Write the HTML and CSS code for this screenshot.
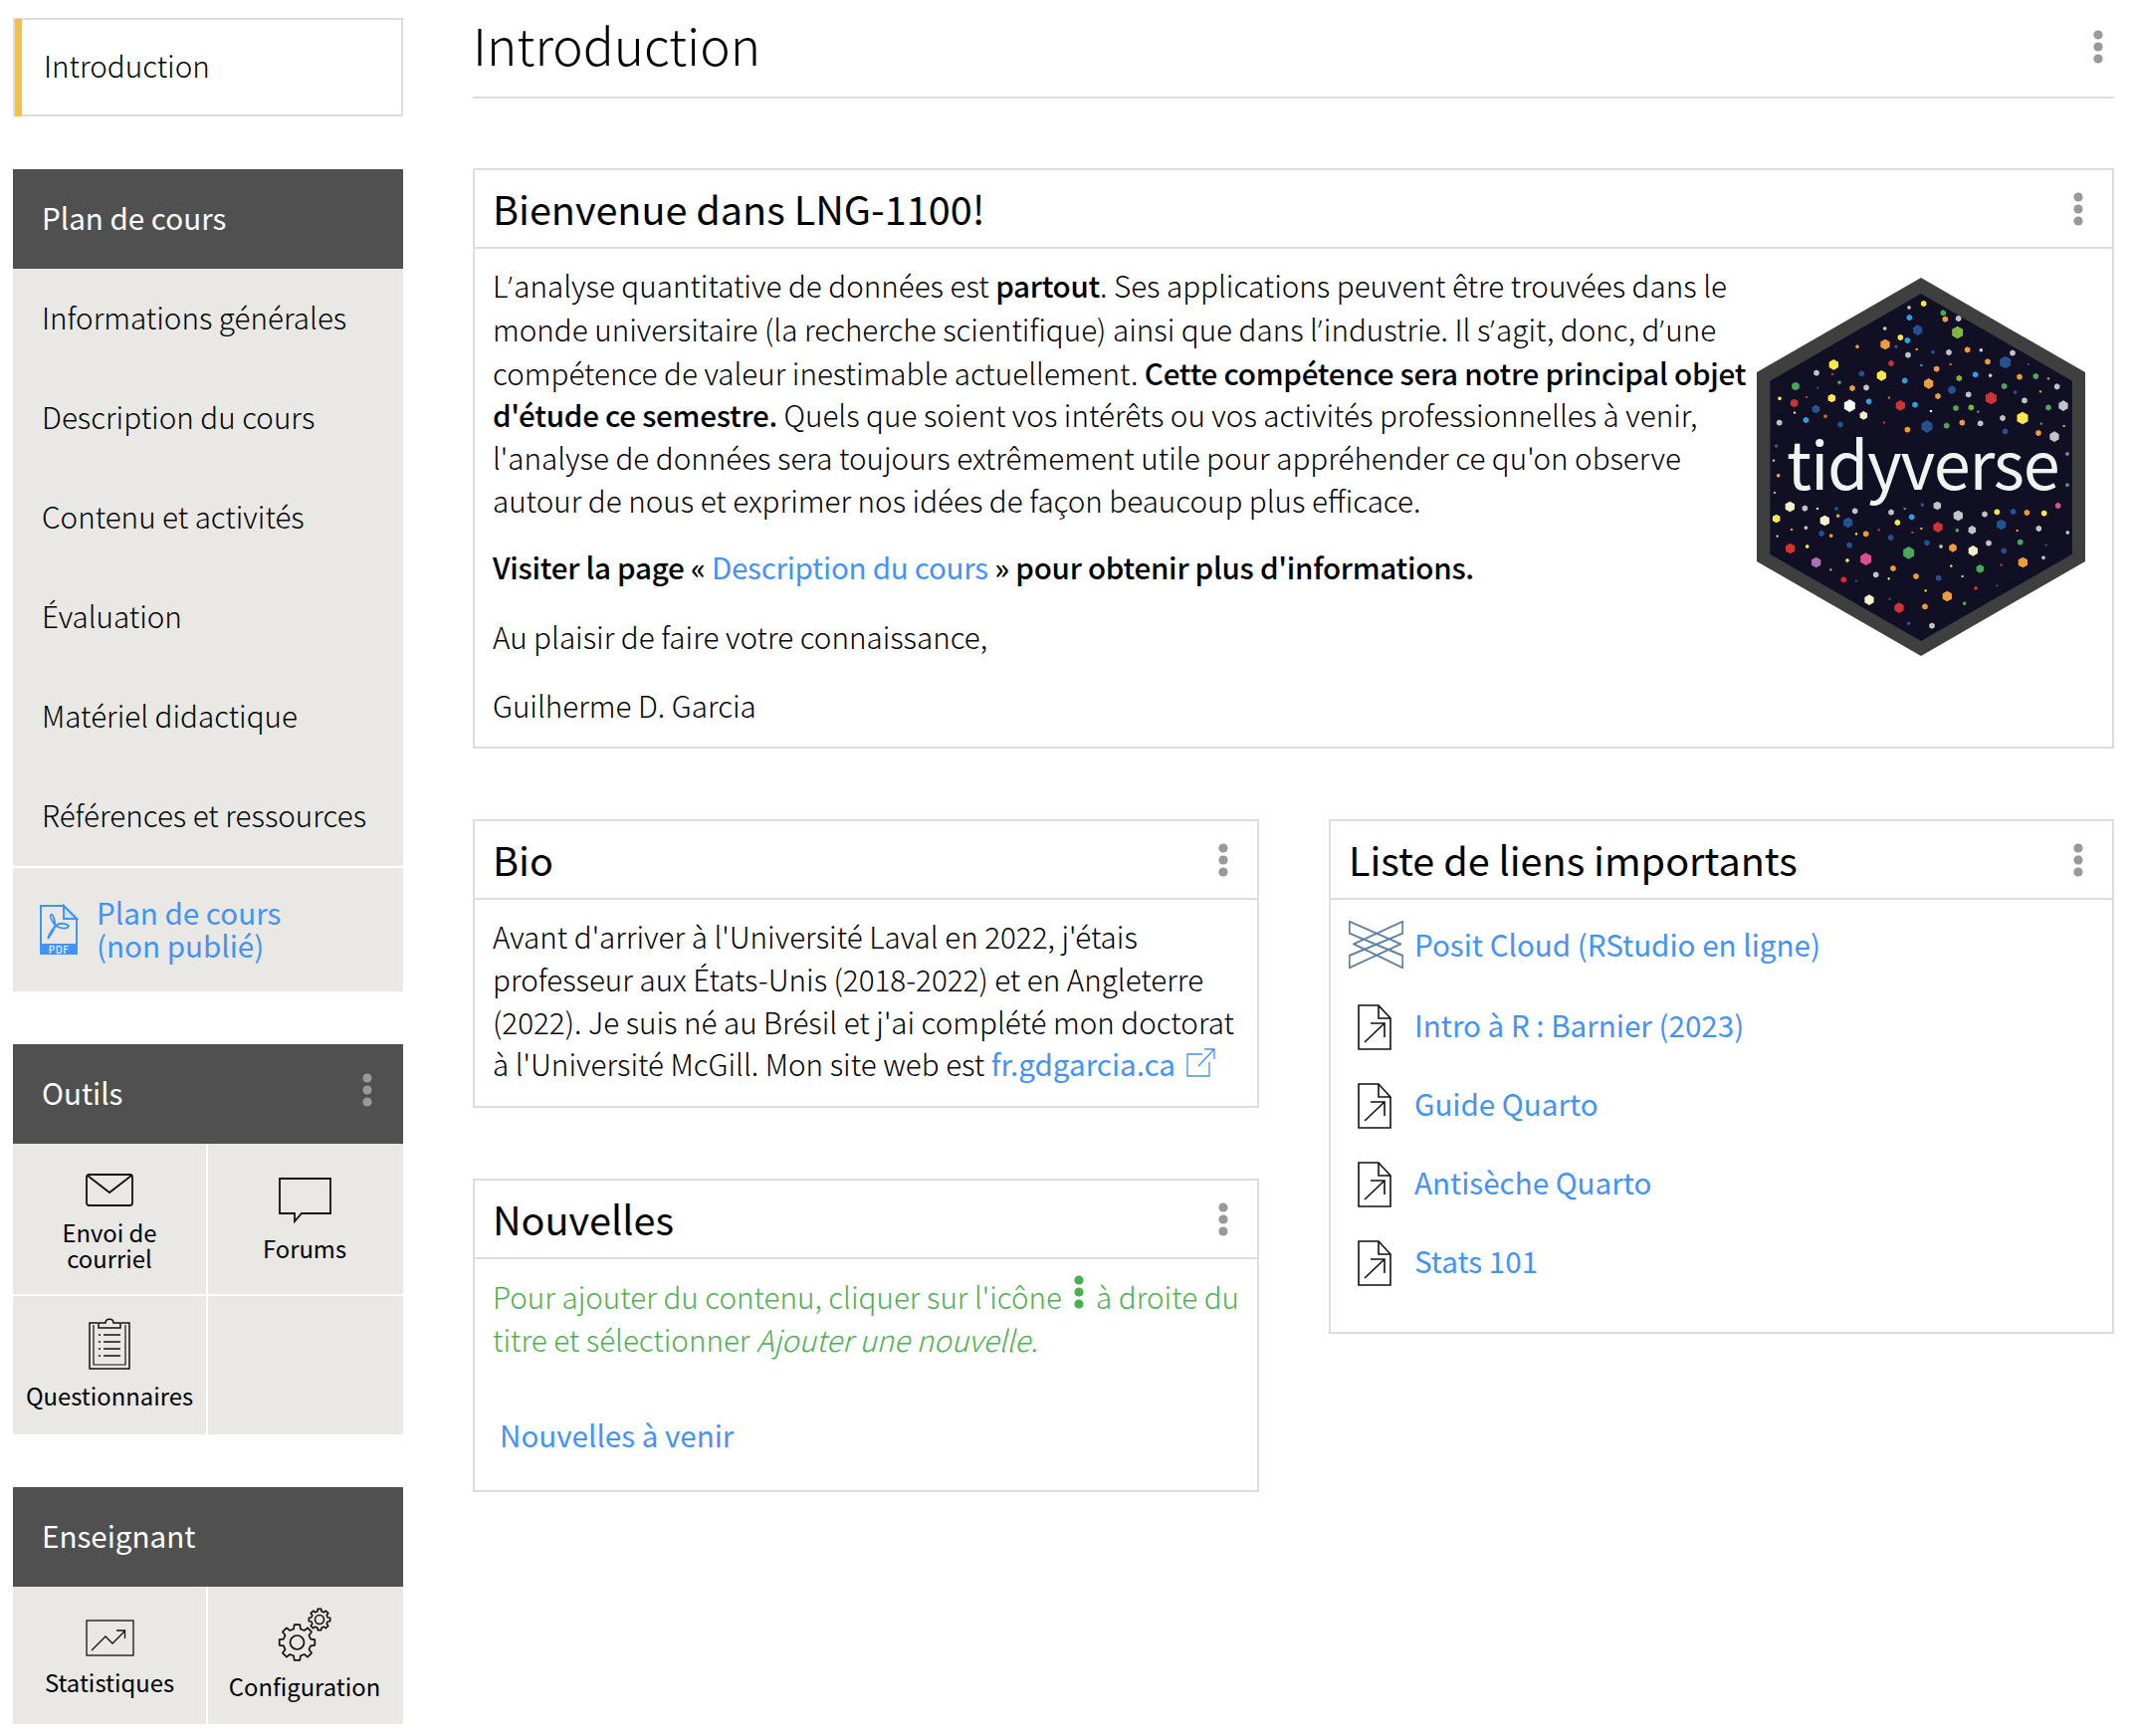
FILE: index.html
```html
<!DOCTYPE html>
<html lang="fr">
<head>
<meta charset="utf-8">
<title>LNG-1100</title>
<link rel="stylesheet" href="styles.css">
</head>
<body>
<svg class="defs" width="0" height="0" aria-hidden="true">
  <defs>
    <symbol id="kebab" viewBox="0 0 10 34"><circle cx="5" cy="5" r="4.6"/><circle cx="5" cy="17" r="4.6"/><circle cx="5" cy="29" r="4.6"/></symbol>
    <symbol id="doc" viewBox="0 0 34 46"><path d="M1 1H21L33 14V45H1Z M21 1V14H33" fill="#fff" stroke="#111" stroke-width="1.6"/><path d="M7 38L27 19M13 19H27V33" fill="none" stroke="#111" stroke-width="1.6"/></symbol>
    <polygon id="gear" points="-3.39,-13.58 -2.82,-17.78 2.82,-17.78 3.39,-13.58 7.2,-12 10.58,-14.57 14.57,-10.58 12,-7.2 13.58,-3.39 17.78,-2.82 17.78,2.82 13.58,3.39 12,7.2 14.57,10.58 10.58,14.57 7.2,12 3.39,13.58 2.82,17.78 -2.82,17.78 -3.39,13.58 -7.2,12 -10.58,14.57 -14.57,10.58 -12,7.2 -13.58,3.39 -17.78,2.82 -17.78,-2.82 -13.58,-3.39 -12,-7.2 -14.57,-10.58 -10.58,-14.57 -7.2,-12"/>
  </defs>
</svg>
<div class="page">
  <aside class="sidebar">
    <div class="intro-box"><span class="intro-label">Introduction</span></div>

    <section class="block block-plan">
      <h2 class="block-head">Plan de cours</h2>
      <nav class="nav-list">
        <a class="nav-item">Informations générales</a>
        <a class="nav-item">Description du cours</a>
        <a class="nav-item">Contenu et activités</a>
        <a class="nav-item">Évaluation</a>
        <a class="nav-item">Matériel didactique</a>
        <a class="nav-item">Références et ressources</a>
      </nav>
      <a class="pdf-row">
        <svg class="pdf-icon" viewBox="0 0 38 50"><path d="M1 1H24L37 14V40H1Z" fill="none" stroke="#4393f5" stroke-width="2"/><path d="M24 1V14H37Z" fill="#cfe2f8" stroke="#4393f5" stroke-width="2"/><rect x="0" y="40" width="38" height="10" fill="#4393f5"/><text x="19" y="49" class="pdf-text" text-anchor="middle">PDF</text><path d="M15.500 21C12 16 9.500 12 11 10C13 8.500 15 14 15.500 21ZM15.500 21C14 26 11 30 8.500 33.500C7.500 32 10 28 15.500 21ZM15.500 21C20 18 26 18 29 21C28 25 21 24 15.500 21Z" fill="none" stroke="#4393f5" stroke-width="1.800" stroke-linejoin="round"/></svg>
        <span class="pdf-label">Plan de cours<br>(non publié)</span>
      </a>
    </section>

    <section class="block">
      <h2 class="block-head">Outils<svg class="kebab kebab-side"><use href="#kebab"/></svg></h2>
      <div class="tool-grid tools-top">
        <a class="tool tool-mail">
          <svg class="ic-mail" viewBox="0 0 48 33"><rect x="1" y="1" width="46" height="31" rx="2.500" fill="none" stroke="#111" stroke-width="1.8"/><path d="M2 2L24 19L46 2" fill="none" stroke="#111" stroke-width="1.8"/></svg>
          <span class="tool-label">Envoi de<br>courriel</span>
        </a>
        <a class="tool tool-forum">
          <svg class="ic-forum" viewBox="0 0 53 46"><path d="M1 1H52V36H23L16 44V36H1Z" fill="none" stroke="#111" stroke-width="1.8"/></svg>
          <span class="tool-label">Forums</span>
        </a>
      </div>
      <div class="tool-grid tools-bottom">
        <a class="tool tool-quiz">
          <svg class="ic-quiz" viewBox="0 0 42 52"><path d="M9 5H1V51H41V5H33" fill="none" stroke="#111" stroke-width="1.5"/><path d="M5 7V47H37V7" fill="none" stroke="#111" stroke-width="1.2"/><path d="M10 10V5H17C17 0 25 0 25 5H32V10Z" fill="none" stroke="#111" stroke-width="1.5"/><path d="M10 17h2M15 17h17M10 24h2M15 24h17M10 31h2M15 31h17M10 38h2M15 38h17" stroke="#111" stroke-width="1.5"/></svg>
          <span class="tool-label">Questionnaires</span>
        </a>
        <div class="tool"></div>
      </div>
    </section>

    <section class="block">
      <h2 class="block-head">Enseignant</h2>
      <div class="tool-grid tools-teacher">
        <a class="tool tool-stats">
          <svg class="ic-stats" viewBox="0 0 49 37"><rect x="1" y="1" width="47" height="35" fill="none" stroke="#111" stroke-width="1.3"/><path d="M6 31L20 17L27 24L39 12M31 11H39.500V19" fill="none" stroke="#111" stroke-width="1.3"/></svg>
          <span class="tool-label">Statistiques</span>
        </a>
        <a class="tool tool-config">
          <svg class="ic-config" viewBox="0 0 53 54"><g fill="none" stroke="#111" stroke-linejoin="round"><use href="#gear" transform="translate(18.500 35)" stroke-width="1.7"/><circle cx="18.500" cy="35" r="7" stroke-width="1.7"/><use href="#gear" transform="translate(41 12) scale(.6)" stroke-width="2.7"/><circle cx="41" cy="12" r="4.500" stroke-width="1.6"/></g></svg>
          <span class="tool-label">Configuration</span>
        </a>
      </div>
    </section>
  </aside>

  <main class="main">
    <header class="page-title">
      <h1 class="page-h1">Introduction</h1>
      <svg class="kebab"><use href="#kebab"/></svg>
    </header>

    <article class="card card-welcome">
      <div class="card-head"><h2 class="card-title">Bienvenue dans LNG-1100!</h2><svg class="kebab"><use href="#kebab"/></svg></div>
      <div class="welcome-body">
        <div class="welcome-text">
          <p class="para para-lead">L<span class="apos">’</span>analyse quantitative de données est <strong>partout</strong>. Ses applications peuvent être trouvées dans le<br>monde universitaire (la recherche scientifique) ainsi que dans l<span class="apos">’</span>industrie. Il s<span class="apos">’</span>agit, donc, d<span class="apos">’</span>une<br>compétence de valeur inestimable actuellement. <strong>Cette compétence sera notre principal objet<br>d'étude ce semestre.</strong> Quels que soient vos intérêts ou vos activités professionnelles à venir,<br>l'analyse de données sera toujours extrêmement utile pour appréhender ce qu'on observe<br>autour de nous et exprimer nos idées de façon beaucoup plus efficace.</p>
          <p class="para"><strong>Visiter la page « <a class="link">Description du cours</a> » pour obtenir plus d'informations.</strong></p>
          <p class="para">Au plaisir de faire votre connaissance,</p>
          <p class="para para-last">Guilherme D. Garcia</p>
        </div>
        <svg class="hex" viewBox="135 117 990 1140" role="img" aria-label="tidyverse">
          <defs>
            <polygon id="a" points="0,-4 3.500,-2 3.500,2 0,4 -3.500,2 -3.500,-2"/>
            <polygon id="b" points="0,-6 5.200,-3 5.200,3 0,6 -5.200,3 -5.200,-3"/>
            <polygon id="c" points="0,-9.500 8.200,-4.750 8.200,4.750 0,9.500 -8.200,4.750 -8.200,-4.750"/>
            <polygon id="d" points="0,-13 11.300,-6.500 11.300,6.500 0,13 -11.300,6.500 -11.300,-6.500"/>
            <polygon id="e" points="0,-16 13.900,-8 13.900,8 0,16 -13.900,8 -13.900,-8"/>
            <polygon id="f" points="0,-19 16.500,-9.500 16.500,9.500 0,19 -16.500,9.500 -16.500,-9.500"/>
          </defs>
          <polygon class="hex-outer" points="630,117 1125,402 1125,972 630,1257 135,972 135,402"/>
          <polygon class="hex-inner" points="630,165 1086,428 1086,950 630,1212 175,950 175,428"/>
          <use href="#c" x="638" y="195" class="dy"/><use href="#b" x="594" y="207" class="ds"/><use href="#c" x="595" y="237" class="dl"/><use href="#c" x="697" y="223" class="dg"/><use href="#c" x="703" y="242" class="do"/><use href="#c" x="743" y="240" class="ds"/><use href="#b" x="521" y="270" class="ds"/><use href="#e" x="620" y="275" class="db"/><use href="#f" x="740" y="282" class="dk"/><use href="#c" x="568" y="297" class="dy"/><use href="#c" x="589" y="306" class="dl"/><use href="#e" x="522" y="318" class="do"/><use href="#b" x="438" y="325" class="do"/><use href="#b" x="555" y="325" class="db"/><use href="#a" x="617" y="333" class="do"/><use href="#b" x="666" y="341" class="db"/><use href="#c" x="714" y="342" class="ds"/><use href="#c" x="770" y="334" class="do"/><use href="#b" x="811" y="335" class="ds"/><use href="#c" x="906" y="344" class="ds"/><use href="#c" x="591" y="350" class="ds"/><use href="#e" x="367" y="379" class="dy"/><use href="#c" x="540" y="375" class="dr"/><use href="#a" x="631" y="381" class="dl"/><use href="#a" x="719" y="378" class="dt"/><use href="#c" x="831" y="370" class="do"/><use href="#f" x="884" y="372" class="db"/><use href="#a" x="954" y="378" class="db"/><use href="#c" x="315" y="404" class="ds"/><use href="#a" x="363" y="408" class="dr"/><use href="#c" x="451" y="406" class="db"/><use href="#e" x="511" y="412" class="dy"/><use href="#c" x="677" y="392" class="do"/><use href="#c" x="745" y="420" class="dk"/><use href="#c" x="794" y="409" class="dl"/><use href="#b" x="839" y="412" class="ds"/><use href="#c" x="927" y="416" class="do"/><use href="#c" x="976" y="414" class="dg"/><use href="#a" x="1014" y="421" class="do"/><use href="#b" x="384" y="433" class="dg"/><use href="#c" x="581" y="427" class="dl"/><use href="#e" x="653" y="436" class="do"/><use href="#c" x="881" y="444" class="dg"/><use href="#c" x="1040" y="445" class="ds"/><use href="#d" x="252" y="444" class="dg"/><use href="#a" x="319" y="449" class="db"/><use href="#c" x="423" y="450" class="do"/><use href="#c" x="465" y="448" class="ds"/><use href="#d" x="723" y="455" class="db"/><use href="#b" x="914" y="462" class="db"/><use href="#a" x="990" y="460" class="do"/><use href="#b" x="204" y="481" class="dy"/><use href="#a" x="285" y="477" class="dr"/><use href="#d" x="361" y="480" class="dy"/><use href="#a" x="534" y="479" class="dt"/><use href="#c" x="681" y="474" class="do"/><use href="#c" x="773" y="469" class="ds"/><use href="#f" x="841" y="480" class="dr"/><use href="#c" x="942" y="487" class="ds"/><use href="#d" x="248" y="495" class="dr"/><use href="#c" x="473" y="490" class="dl"/><use href="#e" x="568" y="502" class="dr"/><use href="#c" x="612" y="500" class="dl"/><use href="#f" x="415" y="503" class="dw"/><use href="#d" x="313" y="513" class="db"/><use href="#c" x="735" y="510" class="dg"/><use href="#c" x="781" y="508" class="dk"/><use href="#a" x="802" y="521" class="dg"/><use href="#c" x="1014" y="508" class="dg"/><use href="#e" x="1059" y="503" class="ds"/><use href="#a" x="249" y="524" class="dy"/><use href="#a" x="660" y="519" class="dw"/><use href="#d" x="457" y="532" class="dc"/><use href="#b" x="342" y="535" class="dt"/><use href="#f" x="936" y="540" class="dy"/><use href="#c" x="876" y="540" class="ds"/><use href="#c" x="283" y="546" class="dl"/><use href="#c" x="203" y="554" class="ds"/><use href="#c" x="387" y="560" class="db"/><use href="#a" x="519" y="554" class="dr"/><use href="#f" x="648" y="565" class="db"/><use href="#c" x="707" y="563" class="dg"/><use href="#c" x="754" y="554" class="do"/><use href="#c" x="809" y="556" class="ds"/><use href="#a" x="992" y="557" class="dg"/><use href="#a" x="1061" y="564" class="do"/><use href="#c" x="589" y="575" class="do"/><use href="#c" x="884" y="580" class="db"/><use href="#c" x="984" y="585" class="do"/><use href="#e" x="1032" y="596" class="ds"/><use href="#b" x="194" y="624" class="db"/><use href="#b" x="1071" y="648" class="dp"/><use href="#a" x="186" y="668" class="ds"/><use href="#b" x="200" y="713" class="do"/><use href="#a" x="189" y="765" class="do"/><use href="#b" x="1071" y="742" class="dg"/>
          <use href="#e" x="235" y="807" class="dc"/><use href="#c" x="280" y="812" class="ds"/><use href="#a" x="318" y="813" class="dy"/><use href="#b" x="375" y="813" class="db"/><use href="#c" x="431" y="820" class="ds"/><use href="#c" x="540" y="824" class="ds"/><use href="#a" x="581" y="813" class="dg"/><use href="#b" x="634" y="802" class="db"/><use href="#d" x="679" y="804" class="ds"/><use href="#e" x="742" y="834" class="ds"/><use href="#c" x="822" y="830" class="ds"/><use href="#c" x="859" y="823" class="dy"/><use href="#c" x="908" y="822" class="db"/><use href="#c" x="949" y="825" class="do"/><use href="#c" x="1001" y="827" class="dy"/><use href="#c" x="1043" y="804" class="dm"/><use href="#d" x="194" y="843" class="dy"/><use href="#b" x="380" y="835" class="do"/><use href="#e" x="340" y="849" class="dc"/><use href="#e" x="410" y="855" class="db"/><use href="#c" x="602" y="838" class="dl"/><use href="#c" x="559" y="855" class="dy"/><use href="#e" x="681" y="869" class="dr"/><use href="#e" x="872" y="861" class="db"/><use href="#b" x="739" y="878" class="dg"/><use href="#d" x="784" y="877" class="ds"/><use href="#a" x="920" y="879" class="do"/><use href="#c" x="985" y="873" class="ds"/><use href="#a" x="240" y="876" class="do"/><use href="#b" x="283" y="871" class="ds"/><use href="#a" x="503" y="877" class="dr"/><use href="#a" x="631" y="873" class="do"/><use href="#a" x="604" y="885" class="dr"/><use href="#c" x="464" y="889" class="do"/><use href="#c" x="330" y="888" class="db"/><use href="#a" x="435" y="889" class="dy"/><use href="#b" x="359" y="895" class="do"/><use href="#b" x="1072" y="885" class="ds"/><use href="#a" x="197" y="896" class="ds"/><use href="#c" x="539" y="900" class="db"/><use href="#c" x="648" y="916" class="db"/><use href="#b" x="690" y="927" class="ds"/><use href="#c" x="834" y="917" class="ds"/><use href="#c" x="929" y="914" class="dg"/><use href="#a" x="1007" y="922" class="db"/><use href="#e" x="236" y="933" class="dr"/><use href="#b" x="287" y="927" class="dy"/><use href="#c" x="414" y="923" class="db"/><use href="#d" x="726" y="931" class="do"/><use href="#e" x="787" y="940" class="dc"/><use href="#c" x="880" y="940" class="db"/><use href="#f" x="593" y="946" class="dg"/><use href="#e" x="314" y="975" class="dp"/><use href="#f" x="464" y="965" class="dm"/><use href="#b" x="408" y="969" class="dy"/><use href="#b" x="999" y="961" class="ds"/><use href="#a" x="872" y="983" class="dr"/><use href="#e" x="937" y="975" class="do"/><use href="#a" x="721" y="986" class="dy"/><use href="#d" x="808" y="994" class="dg"/><use href="#c" x="546" y="993" class="do"/><use href="#a" x="358" y="997" class="do"/><use href="#c" x="494" y="1012" class="ds"/><use href="#c" x="615" y="1017" class="do"/><use href="#c" x="683" y="1022" class="db"/><use href="#a" x="755" y="1017" class="ds"/><use href="#a" x="533" y="1024" class="dy"/><use href="#c" x="397" y="1027" class="dr"/><use href="#a" x="435" y="1031" class="db"/><use href="#a" x="644" y="1060" class="dy"/><use href="#b" x="795" y="1053" class="dr"/><use href="#a" x="859" y="1045" class="db"/><use href="#e" x="709" y="1077" class="do"/><use href="#e" x="474" y="1088" class="dc"/><use href="#a" x="536" y="1085" class="db"/><use href="#b" x="761" y="1099" class="dg"/><use href="#c" x="642" y="1108" class="do"/><use href="#e" x="564" y="1112" class="dr"/><use href="#b" x="593" y="1159" class="db"/><use href="#c" x="663" y="1166" class="ds"/>
          <text class="hex-text" x="225" y="755">tidyverse</text>
        </svg>
      </div>
    </article>

    <div class="columns">
      <div class="col">
        <article class="card card-bio">
          <div class="card-head"><h2 class="card-title">Bio</h2><svg class="kebab"><use href="#kebab"/></svg></div>
          <p class="para card-body">Avant d'arriver à l'Université Laval en 2022, j'étais<br>professeur aux États-Unis (2018-2022) et en Angleterre<br>(2022). Je suis né au Brésil et j'ai complété mon doctorat<br>à l'Université McGill. Mon site web est <a class="link">fr.gdgarcia.ca</a><svg class="ext" viewBox="0 0 29 29"><path d="M16 6H1V28H23V14M12 18L28 1M18 1H28V11" fill="none" stroke="#4393f5" stroke-width="1.300"/></svg></p>
        </article>
        <article class="card card-news">
          <div class="card-head"><h2 class="card-title">Nouvelles</h2><svg class="kebab"><use href="#kebab"/></svg></div>
          <div class="news-body">
            <p class="para note">Pour ajouter du contenu, cliquer sur l'icône<svg class="kebab-note"><use href="#kebab"/></svg>à droite du<br>titre et sélectionner <em>Ajouter une nouvelle.</em></p>
            <a class="link news-link">Nouvelles à venir</a>
          </div>
        </article>
      </div>
      <article class="card card-links">
        <div class="card-head"><h2 class="card-title">Liste de liens importants</h2><svg class="kebab"><use href="#kebab"/></svg></div>
        <ul class="links">
          <li class="link-row link-first">
            <svg class="ic-posit" viewBox="0 0 55 48"><path d="M.7 12.700V.7L52.300 23.300L.7 47.300V35L54.300 12.700V.7L5 23.300L54.300 47.300V35L.7 12.700Z" fill="none" stroke="#5f81a6" stroke-width="1.900" stroke-linejoin="round"/></svg>
            <a class="link">Posit Cloud (RStudio en ligne)</a>
          </li>
          <li class="link-row"><span class="doc-slot"><svg class="ic-doc"><use href="#doc"/></svg></span><a class="link">Intro à R : Barnier (2023)</a></li>
          <li class="link-row"><span class="doc-slot"><svg class="ic-doc"><use href="#doc"/></svg></span><a class="link">Guide Quarto</a></li>
          <li class="link-row"><span class="doc-slot"><svg class="ic-doc"><use href="#doc"/></svg></span><a class="link">Antisèche Quarto</a></li>
          <li class="link-row"><span class="doc-slot"><svg class="ic-doc"><use href="#doc"/></svg></span><a class="link">Stats 101</a></li>
        </ul>
      </article>
    </div>
  </main>
</div>
</body>
</html>
```
FILE: styles.css
```css
* { box-sizing: border-box; }
html, body { margin: 0; padding: 0; background: #fff; }
body {
  font-family: "Noto Sans CJK SC", "Noto Sans CJK JP", "Open Sans", sans-serif;
  font-weight: 300;
  color: #000;
  height: 1744px;
  overflow: hidden;
}
.defs { position: absolute; }
.page { display: flex; gap: 70px; padding-left: 13px; padding-right: 20px; }
.sidebar { width: 392px; flex: none; padding-top: 18px; }
.main { width: 1649px; flex: none; }

.intro-box {
  position: relative;
  height: 99px; border: 2px solid #ddd;
  display: flex; align-items: center; padding: 0 0 4px 29px;
}
.intro-box::before {
  content: ""; position: absolute; left: 0; top: -1px; bottom: -2px; width: 7px; background: #f5bf42;
}
.intro-label { font-size: 29.600px; }

.block { margin-top: 53px; background: #e9e8e5; }
.block-head {
  margin: 0; height: 100px; background: #505050; color: #fff; font-size: 29.600px; font-weight: 400;
  display: flex; align-items: center; justify-content: space-between; padding: 0 32px 4px 29px;
}
.nav-list { display: flex; flex-direction: column; border-bottom: 2px solid #fff; }
.nav-item { height: 100px; line-height: 98px; padding-left: 29px; font-size: 29.600px; }
.pdf-row { height: 124px; display: flex; align-items: center; gap: 19px; padding-left: 27px; }
.pdf-icon { width: 38px; height: 50px; flex: none; overflow: visible; }
.pdf-text { font-size: 10px; letter-spacing: .6px; fill: #fff; font-weight: 400; }
.pdf-label { font-size: 29.600px; line-height: 33px; color: #4393f5; font-weight: 400; margin-top: -2px; }

.tool-grid { display: grid; grid-template-columns: 196px 196px; }
.tools-top { height: 153px; }
.tools-bottom { height: 139px; }
.tools-teacher { height: 138px; }
.tools-top .tool { border-bottom: 2px solid #fff; }
.tool { display: flex; flex-direction: column; align-items: center; border-right: 2px solid #fff; }
.tool + .tool { border-right: 0; padding-right: 2px; }
.tool-label { font-size: 23.800px; line-height: 26px; font-weight: 400; text-align: center; }
.tool-mail { padding-top: 30px; }
.tool-mail .tool-label { margin-top: 13px; }
.tool-forum { padding-top: 34px; }
.tool-forum .tool-label { margin-top: 12px; }
.tool-quiz { padding-top: 22px; }
.tool-quiz .tool-label { margin-top: 13px; }
.tool-stats { padding-top: 33px; }
.tool-stats .tool-label { margin-top: 13px; }
.tool-config { padding-top: 21px; }
.tool-config .tool-label { margin-top: 12px; }
.ic-mail { width: 48px; height: 33px; }
.ic-forum { width: 53px; height: 46px; }
.ic-quiz { width: 42px; height: 52px; }
.ic-stats { width: 49px; height: 37px; }
.ic-config { width: 53px; height: 54px; overflow: visible; }

.kebab { width: 10px; height: 34px; fill: #999; flex: none; }
.kebab-side { margin: 0 -1px 4px 0; height: 38px; }
.page-title {
  height: 99px; border-bottom: 2px solid #ddd; display: flex; align-items: center;
  justify-content: space-between; padding-right: 11px;
}
.page-title .kebab { margin-bottom: 4px; }
.page-h1 { margin: 0 0 10px; font-size: 51.300px; font-weight: 300; }

.card { border: 2px solid #ddd; background: #fff; }
.card-welcome { margin-top: 70px; height: 583px; }
.card-head {
  height: 79px; border-bottom: 2px solid #ddd; display: flex; align-items: center;
  justify-content: space-between; padding: 0 29px 0 18px;
}
.card-title { margin: 0 0 2px; font-size: 39.600px; font-weight: 400; }
.welcome-body { display: flex; justify-content: space-between; padding: 0 20px 0 18px; }
.para { margin: 0 0 27px; font-size: 29.600px; line-height: 42.800px; }
.para-lead { margin-bottom: 24px; }
.para-last { margin-bottom: 0; }
.para strong { font-weight: 500; letter-spacing: -0.27px; }
.apos { font-family: "Open Sans", sans-serif; letter-spacing: 1.5px; }
.welcome-text { padding-top: 16px; }
.hex { width: 330px; height: 380px; position: absolute; left: 1765px; top: 279px; }
.hex-outer { fill: #3f3f3f; }
.hex-inner { fill: #110f24; }
.hex-text { font-size: 200px; letter-spacing: -3.700px; font-weight: 400; fill: #f2f2f2; }
.dy { fill: #fde74c; } .ds { fill: #c3c3c8; } .dl { fill: #2e9fe0; } .dg { fill: #4ba85a; }
.do { fill: #ee9c3c; } .db { fill: #25528f; } .dk { fill: #84b440; } .dr { fill: #cf3333; }
.dt { fill: #d8691e; } .dw { fill: #fff; } .dc { fill: #f7eecb; } .dp { fill: #a871b1; } .dm { fill: #dd4f88; }

.link { color: #4393f5; font-weight: 400; }
.columns { display: flex; gap: 70px; margin-top: 71px; align-items: flex-start; }
.col { width: 790px; flex: none; }
.card-body { margin: 0; padding: 16px 10px 8px 18px; }
.ext { width: 29px; height: 29px; margin-left: 11px; vertical-align: -1px; }
.card-bio { height: 290px; }
.card-news { margin-top: 71px; height: 315px; }
.news-body { padding: 16px 8px 0 18px; }
.note { color: #4caf50; margin-bottom: 52px; white-space: nowrap; }
.kebab-note { width: 10px; height: 34px; fill: #4caf50; margin: 0 12px; vertical-align: 0; }
.news-link { font-size: 29.600px; padding-left: 7px; display: block; line-height: 43px; }
.card-links { flex: 1; height: 517px; }
.links { list-style: none; margin: 0; padding: 3px 0 0; display: flex; flex-direction: column; }
.link-row { height: 79px; display: flex; align-items: center; font-size: 29.600px; }
.link-first { height: 83px; }
.ic-posit { width: 55px; height: 48px; margin-left: 18px; margin-right: 11px; flex: none; }
.doc-slot { width: 84px; padding: 4px 0 0 27px; display: flex; flex: none; }
.ic-doc { width: 34px; height: 46px; }
```
